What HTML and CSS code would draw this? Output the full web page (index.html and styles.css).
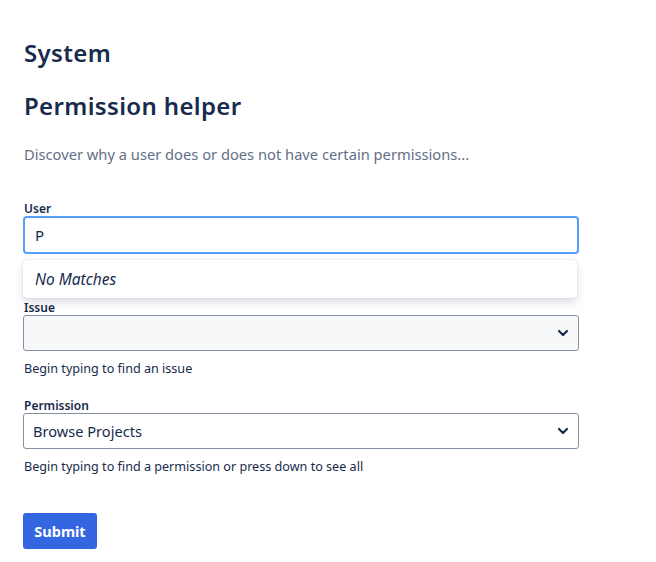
FILE: index.html
```html
<!DOCTYPE html>
<html>
<head>
<meta charset="utf-8">
<link rel="stylesheet" href="styles.css">
</head>
<body>
<main class="page">
  <h1 class="title">System</h1>
  <h2 class="subtitle">Permission helper</h2>
  <p class="desc">Discover why a user does or does not have certain permissions...</p>
  <form class="form">
    <div class="field field-user">
      <label class="label">User</label>
      <div class="input-wrap">
        <div class="input input-focus">P</div>
        <div class="dropdown"><span class="nomatch">No Matches</span></div>
      </div>
    </div>
    <div class="field">
      <label class="label">Issue</label>
      <div class="select select-empty">
        <span class="select-text"></span>
        <svg class="chev" width="12" height="8" viewBox="0 0 12 8"><path d="M2 2 L6 6 L10 2" fill="none" stroke="#172B4D" stroke-width="2.2" stroke-linecap="round" stroke-linejoin="round"/></svg>
      </div>
      <div class="help">Begin typing to find an issue</div>
    </div>
    <div class="field">
      <label class="label">Permission</label>
      <div class="select">
        <span class="select-text">Browse Projects</span>
        <svg class="chev" width="12" height="8" viewBox="0 0 12 8"><path d="M2 2 L6 6 L10 2" fill="none" stroke="#172B4D" stroke-width="2.2" stroke-linecap="round" stroke-linejoin="round"/></svg>
      </div>
      <div class="help">Begin typing to find a permission or press down to see all</div>
    </div>
    <div class="actions">
      <button type="button" class="btn">Submit</button>
    </div>
  </form>
</main>
</body>
</html>
```

FILE: styles.css
```css
html, body {
  margin: 0;
  padding: 0;
  background: #ffffff;
}
body {
  font-family: "Noto Sans", "Open Sans", sans-serif;
  color: #172B4D;
}
.page {
  padding: 37px 0 0 23px;
  width: 556px;
}
.title {
  margin: 0 0 0 1px;
  font-size: 24px;
  font-weight: 600;
  line-height: 32px;
  letter-spacing: 0.35px;
}
.subtitle {
  margin: 21px 0 0 1px;
  font-size: 24px;
  font-weight: 600;
  line-height: 32px;
  letter-spacing: 0.35px;
}
.desc {
  margin: 20px 0 0 1px;
  font-size: 14.7px;
  line-height: 24px;
  color: #626F86;
}
.form {
  margin-top: 33px;
}
.field {
  margin-bottom: 19px;
}
.field-user {
  margin-bottom: 44px;
}
.label {
  display: block;
  font-size: 12px;
  font-weight: 600;
  line-height: 14px;
  padding-top: 3px;
  margin: 0 0 0 1px;
}
.input-wrap {
  position: relative;
}
.input {
  box-sizing: border-box;
  height: 38px;
  border-radius: 4px;
  padding: 0 10px;
  font-size: 15px;
  display: flex;
  align-items: center;
}
.input-focus {
  border: 2px solid #579DFF;
}
.dropdown {
  position: absolute;
  left: 0;
  right: 2px;
  top: 44px;
  height: 38px;
  background: #fff;
  border-radius: 4px;
  box-shadow: 0 4px 10px rgba(9, 30, 66, 0.15), 0 0 1px rgba(9, 30, 66, 0.31);
  display: flex;
  align-items: center;
  padding-left: 12px;
  box-sizing: border-box;
  z-index: 2;
}
.nomatch {
  font-style: italic;
  font-size: 15.5px;
  color: #172B4D;
}
.select {
  box-sizing: border-box;
  height: 36px;
  border: 1px solid #8590A2;
  border-radius: 3px;
  display: flex;
  align-items: center;
  justify-content: space-between;
  padding: 0 9px 0 9px;
  background: #fff;
}
.select-empty {
  background: #F7F8F9;
}
.select-text {
  font-size: 14.6px;
  color: #172B4D;
}
.chev {
  display: block;
}
.help {
  margin: 10px 0 0 1px;
  font-size: 12.6px;
  line-height: 16px;
  color: #172B4D;
}
.actions {
  margin-top: 38px;
}
.btn {
  display: block;
  height: 36px;
  width: 74px;
  padding: 0;
  border: none;
  border-radius: 3px;
  background: #3366E0;
  color: #fff;
  font-family: "Noto Sans", "Open Sans", sans-serif;
  font-size: 14.5px;
  font-weight: 700;
  cursor: pointer;
}
```
